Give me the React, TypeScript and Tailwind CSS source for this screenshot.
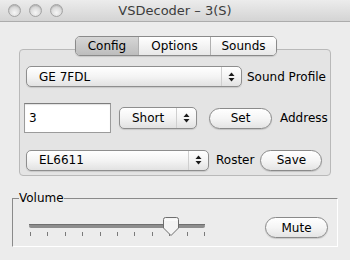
import type { ReactNode } from "react"

// Up/down arrows used on the right side of aqua popups
function UpDown() {
  return (
    <svg width="7" height="10" viewBox="0 0 7 10" aria-hidden="true">
      <path d="M3.5 0.5 L6.5 4 L0.5 4 Z" fill="#1a1a1a" />
      <path d="M3.5 9.5 L6.5 6 L0.5 6 Z" fill="#1a1a1a" />
    </svg>
  )
}

function Combo({ value, className }: { value: string; className: string }) {
  return (
    <div
      className={`flex shrink-0 items-center rounded-[5px] border border-[#8e8e8e] bg-gradient-to-b from-white via-[#f4f4f4] to-[#e2e2e2] shadow-[0_1px_1px_rgba(0,0,0,0.12)] ${className}`}
    >
      <span className="flex-1 truncate pl-[12px] leading-none">{value}</span>
      <div className="flex h-full w-[20px] items-center justify-center border-l border-[#cfcfcf]">
        <UpDown />
      </div>
    </div>
  )
}

function PillButton({ children, className }: { children: ReactNode; className: string }) {
  return (
    <button
      className={`flex shrink-0 items-center justify-center rounded-full border border-[#8a8a8a] bg-gradient-to-b from-white via-[#f5f5f5] to-[#e4e4e4] leading-none shadow-[0_1px_1px_rgba(0,0,0,0.15)] ${className}`}
    >
      {children}
    </button>
  )
}

function TrafficLight() {
  return (
    <span className="h-[13px] w-[13px] rounded-full border border-[#a3a3a3] bg-[radial-gradient(circle_at_50%_70%,#f6f6f6_0%,#dadada_55%,#c4c4c4_100%)] shadow-[inset_0_1px_1px_rgba(0,0,0,0.15)]" />
  )
}

function Slider() {
  const ticks = Array.from({ length: 11 }, (_, i) => 2 + i * 17.4)
  return (
    <svg width="184" height="26" viewBox="0 0 184 26" aria-hidden="true">
      {/* track */}
      <rect x="1" y="8" width="176" height="4" rx="2" fill="#8d8d8d" />
      <rect x="1" y="8" width="176" height="1" fill="#6f6f6f" />
      {/* ticks */}
      {ticks.map((x) => (
        <rect key={x} x={Math.round(x)} y="16" width="1" height="4" fill="#7a7a7a" />
      ))}
      {/* thumb */}
      <path
        d="M135.5 3.5 Q135.5 1.5 137.5 1.5 L148.5 1.5 Q150.5 1.5 150.5 3.5 L150.5 12 L143 19.5 L135.5 12 Z"
        fill="#f4f4f4"
        stroke="#6e6e6e"
        strokeWidth="1"
      />
      <path d="M137 4 L149 4" stroke="#ffffff" strokeWidth="1" />
    </svg>
  )
}

export default function App() {
  return (
    <div className="h-[260px] w-[350px] overflow-hidden bg-[#ececec] font-['DejaVu_Sans',sans-serif] text-[12px] text-black">
      {/* Title bar */}
      <div className="grid h-[22px] grid-cols-[1fr_auto_1fr] items-center border-b border-[#acacac] bg-gradient-to-b from-[#ececec] to-[#d4d4d4]">
        <div className="flex items-center gap-[8px] pl-[8px]">
          <TrafficLight />
          <TrafficLight />
          <TrafficLight />
        </div>
        <div className="text-[13px] leading-none text-[#3c3c3c]">VSDecoder – 3(S)</div>
        <div />
      </div>

      {/* Tabs */}
      <div className="relative z-10 mt-[14px] ml-[75px] flex h-[20px] w-[202px] overflow-hidden rounded-[5px] border border-[#8a8a8a] shadow-[0_1px_1px_rgba(0,0,0,0.12)]">
        <div className="flex w-[62px] items-center justify-center bg-gradient-to-b from-[#d6d6d6] to-[#bdbdbd] leading-none">
          Config
        </div>
        <div className="flex w-[72px] items-center justify-center border-l border-[#b0b0b0] bg-gradient-to-b from-white to-[#e8e8e8] leading-none">
          Options
        </div>
        <div className="flex flex-1 items-center justify-center border-l border-[#b0b0b0] bg-gradient-to-b from-white to-[#e8e8e8] leading-none">
          Sounds
        </div>
      </div>

      {/* Config panel */}
      <div className="-mt-[7px] ml-[19px] h-[127px] w-[312px] rounded-[4px] border border-[#b9b9b9] bg-[#e4e4e4] pt-[16px]">
        <div className="flex h-[21px] items-center">
          <Combo value="GE 7FDL" className="ml-[6px] h-[21px] w-[216px]" />
          <span className="ml-[5px] whitespace-nowrap leading-none">Sound Profile</span>
        </div>

        <div className="mt-[16px] flex h-[30px] items-center">
          <div className="ml-[4px] flex h-[30px] w-[87px] shrink-0 items-center border border-[#9b9b9b] border-t-[#7d7d7d] bg-white pl-[4px] shadow-[inset_0_1px_1px_rgba(0,0,0,0.12)]">
            <span className="leading-none">3</span>
          </div>
          <Combo value="Short" className="ml-[8px] h-[22px] w-[78px]" />
          <PillButton className="ml-[12px] h-[21px] w-[63px]">Set</PillButton>
          <span className="ml-[8px] whitespace-nowrap leading-none">Address</span>
        </div>

        <div className="mt-[16px] flex h-[22px] items-center">
          <Combo value="EL6611" className="ml-[6px] h-[21px] w-[183px]" />
          <span className="ml-[7px] whitespace-nowrap leading-none">Roster</span>
          <PillButton className="ml-[6px] h-[21px] w-[62px]">Save</PillButton>
        </div>
      </div>

      {/* Volume group */}
      <fieldset className="mt-[15px] ml-[12px] h-[56px] w-[326px] border border-t-[#8a8a8a] border-l-[#8a8a8a] border-r-white border-b-white p-0">
        <legend className="ml-[6px] px-0 text-[12px] leading-[15px]">Volume</legend>
        <div className="flex items-start">
          <div className="ml-[15px] mt-[10px]">
            <Slider />
          </div>
          <PillButton className="mt-[11px] mr-[9px] ml-auto h-[21px] w-[63px]">Mute</PillButton>
        </div>
      </fieldset>
    </div>
  )
}
